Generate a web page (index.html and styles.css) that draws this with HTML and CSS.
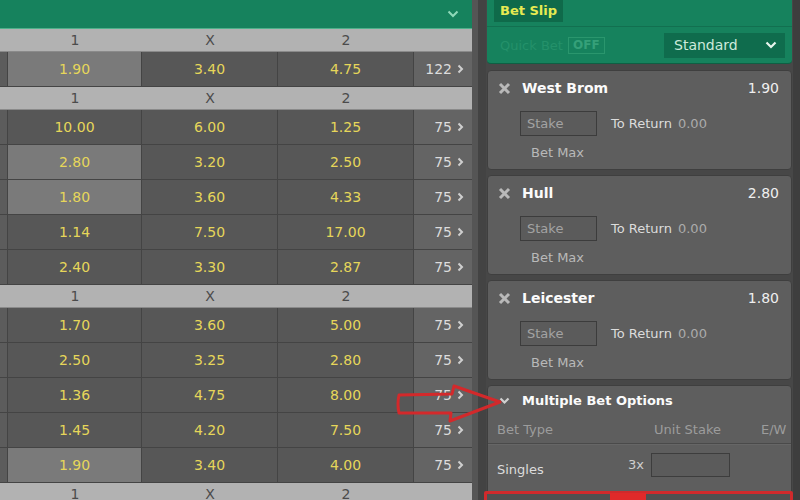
FILE: index.html
```html
<!DOCTYPE html>
<html>
<head>
<meta charset="utf-8">
<link rel="stylesheet" href="styles.css">
</head>
<body>
<div class="page">
  <div class="markets">
    <div class="topbar">
      <svg class="topchev" width="12" height="8" viewBox="0 0 12 8"><path d="M1.5 1.5 L6 6 L10.5 1.5" fill="none" stroke="#8fd9b9" stroke-width="2"/></svg>
    </div>
    <div class="grid">
      <div class="hdr"><span></span><span>1</span><span>X</span><span>2</span><span></span></div>
      <div class="row"><span class="edge"></span><span class="odd sel">1.90</span><span class="odd">3.40</span><span class="odd">4.75</span><span class="more">122<svg class="mchev" width="7" height="10" viewBox="0 0 7 10"><path d="M1.5 1.5 L5 5 L1.5 8.5" fill="none" stroke="#cfcfcf" stroke-width="2"/></svg></span></div>
      <div class="hdr"><span></span><span>1</span><span>X</span><span>2</span><span></span></div>
      <div class="row"><span class="edge"></span><span class="odd">10.00</span><span class="odd">6.00</span><span class="odd">1.25</span><span class="more">75<svg class="mchev" width="7" height="10" viewBox="0 0 7 10"><path d="M1.5 1.5 L5 5 L1.5 8.5" fill="none" stroke="#cfcfcf" stroke-width="2"/></svg></span></div>
      <div class="row"><span class="edge"></span><span class="odd sel">2.80</span><span class="odd">3.20</span><span class="odd">2.50</span><span class="more">75<svg class="mchev" width="7" height="10" viewBox="0 0 7 10"><path d="M1.5 1.5 L5 5 L1.5 8.5" fill="none" stroke="#cfcfcf" stroke-width="2"/></svg></span></div>
      <div class="row"><span class="edge"></span><span class="odd sel">1.80</span><span class="odd">3.60</span><span class="odd">4.33</span><span class="more">75<svg class="mchev" width="7" height="10" viewBox="0 0 7 10"><path d="M1.5 1.5 L5 5 L1.5 8.5" fill="none" stroke="#cfcfcf" stroke-width="2"/></svg></span></div>
      <div class="row"><span class="edge"></span><span class="odd">1.14</span><span class="odd">7.50</span><span class="odd">17.00</span><span class="more">75<svg class="mchev" width="7" height="10" viewBox="0 0 7 10"><path d="M1.5 1.5 L5 5 L1.5 8.5" fill="none" stroke="#cfcfcf" stroke-width="2"/></svg></span></div>
      <div class="row"><span class="edge"></span><span class="odd">2.40</span><span class="odd">3.30</span><span class="odd">2.87</span><span class="more">75<svg class="mchev" width="7" height="10" viewBox="0 0 7 10"><path d="M1.5 1.5 L5 5 L1.5 8.5" fill="none" stroke="#cfcfcf" stroke-width="2"/></svg></span></div>
      <div class="hdr"><span></span><span>1</span><span>X</span><span>2</span><span></span></div>
      <div class="row"><span class="edge"></span><span class="odd">1.70</span><span class="odd">3.60</span><span class="odd">5.00</span><span class="more">75<svg class="mchev" width="7" height="10" viewBox="0 0 7 10"><path d="M1.5 1.5 L5 5 L1.5 8.5" fill="none" stroke="#cfcfcf" stroke-width="2"/></svg></span></div>
      <div class="row"><span class="edge"></span><span class="odd">2.50</span><span class="odd">3.25</span><span class="odd">2.80</span><span class="more">75<svg class="mchev" width="7" height="10" viewBox="0 0 7 10"><path d="M1.5 1.5 L5 5 L1.5 8.5" fill="none" stroke="#cfcfcf" stroke-width="2"/></svg></span></div>
      <div class="row"><span class="edge"></span><span class="odd">1.36</span><span class="odd">4.75</span><span class="odd">8.00</span><span class="more">75<svg class="mchev" width="7" height="10" viewBox="0 0 7 10"><path d="M1.5 1.5 L5 5 L1.5 8.5" fill="none" stroke="#cfcfcf" stroke-width="2"/></svg></span></div>
      <div class="row"><span class="edge"></span><span class="odd">1.45</span><span class="odd">4.20</span><span class="odd">7.50</span><span class="more">75<svg class="mchev" width="7" height="10" viewBox="0 0 7 10"><path d="M1.5 1.5 L5 5 L1.5 8.5" fill="none" stroke="#cfcfcf" stroke-width="2"/></svg></span></div>
      <div class="row"><span class="edge"></span><span class="odd sel">1.90</span><span class="odd">3.40</span><span class="odd">4.00</span><span class="more">75<svg class="mchev" width="7" height="10" viewBox="0 0 7 10"><path d="M1.5 1.5 L5 5 L1.5 8.5" fill="none" stroke="#cfcfcf" stroke-width="2"/></svg></span></div>
      <div class="hdr"><span></span><span>1</span><span>X</span><span>2</span><span></span></div>
    </div>
  </div>
  <div class="divider"></div>
  <div class="slip">
    <div class="slip-head">
      <div class="tabrow"><span class="tab">Bet Slip</span></div>
      <div class="quickrow">
        <span class="quick">Quick Bet</span>
        <span class="off">OFF</span>
        <span class="select">Standard<svg width="12" height="8" viewBox="0 0 12 8"><path d="M1.5 1.5 L6 6 L10.5 1.5" fill="none" stroke="#e8f5ee" stroke-width="2.2"/></svg></span>
      </div>
    </div>

    <div class="card">
      <div class="title"><svg class="x" width="13" height="13" viewBox="0 0 13 13"><path d="M2 2 L11 11 M11 2 L2 11" stroke="#b9b9b9" stroke-width="3"/></svg><span class="name">West Brom</span><span class="price">1.90</span></div>
      <div class="stakerow"><span class="stake">Stake</span><span class="ret">To Return</span><span class="zero">0.00</span></div>
      <div class="betmax">Bet Max</div>
    </div>
    <div class="card">
      <div class="title"><svg class="x" width="13" height="13" viewBox="0 0 13 13"><path d="M2 2 L11 11 M11 2 L2 11" stroke="#b9b9b9" stroke-width="3"/></svg><span class="name">Hull</span><span class="price">2.80</span></div>
      <div class="stakerow"><span class="stake">Stake</span><span class="ret">To Return</span><span class="zero">0.00</span></div>
      <div class="betmax">Bet Max</div>
    </div>
    <div class="card">
      <div class="title"><svg class="x" width="13" height="13" viewBox="0 0 13 13"><path d="M2 2 L11 11 M11 2 L2 11" stroke="#b9b9b9" stroke-width="3"/></svg><span class="name">Leicester</span><span class="price">1.80</span></div>
      <div class="stakerow"><span class="stake">Stake</span><span class="ret">To Return</span><span class="zero">0.00</span></div>
      <div class="betmax">Bet Max</div>
    </div>
    <div class="card multi">
      <div class="title"><svg class="x" width="13" height="13" viewBox="0 0 13 13"><path d="M2.5 4.5 L6.5 8.5 L10.5 4.5" fill="none" stroke="#d0d0d0" stroke-width="2.2"/></svg><span class="name small">Multiple Bet Options</span></div>
      <div class="colhead"><span class="bt">Bet Type</span><span class="us">Unit Stake</span><span class="ew">E/W</span></div>
      <div class="singles"><span class="sg">Singles</span><span class="mult">3x</span><span class="unit"></span></div>
    </div>
  </div>
  <div class="rightedge"></div>

  <svg class="arrow" width="120" height="50" viewBox="0 0 120 50"><path d="M9 15 L62 14 L64 6 L110 22 L60 41 L61 33 L9 33 Q7 24 9 15 Z" fill="none" stroke="#d3292b" stroke-width="3" stroke-linejoin="round"/></svg>
  <div class="redbox"><span class="redblock"></span></div>
</div>
</body>
</html>
```

FILE: styles.css
```css
html, body {
  margin: 0;
  padding: 0;
}
body {
  background: #474747;
  font-family: "DejaVu Sans", Verdana, sans-serif;
  width: 800px;
  height: 500px;
  overflow: hidden;
}
.page {
  position: relative;
  display: flex;
  width: 800px;
  height: 500px;
  overflow: hidden;
}
.markets {
  width: 472px;
  flex: none;
  display: flex;
  flex-direction: column;
}
.markets > *, .grid > *, .slip > * {
  flex: none;
}
.topbar {
  height: 29px;
  box-sizing: border-box;
  background: #16825d;
  border-bottom: 1px solid #4fb08b;
  display: flex;
  align-items: center;
  justify-content: flex-end;
  padding-right: 13px;
}
.grid {
  display: flex;
  flex-direction: column;
}
.hdr, .row {
  display: grid;
  grid-template-columns: 8px 134px 136px 136px 58px;
}
.hdr {
  height: 23px;
  background: #b2b2b2;
  color: #4b4b4b;
  font-size: 14px;
  line-height: 23px;
  text-align: center;
  border-bottom: 1px solid #8a8a8a;
  box-sizing: border-box;
}
.row {
  height: 35px;
  box-sizing: border-box;
}
.row > span {
  box-sizing: border-box;
  border-right: 1px solid #444;
  border-bottom: 1px solid #444;
  display: flex;
  align-items: center;
  justify-content: center;
}
.edge {
  background: #5c5c5c;
}
.odd {
  background: #575757;
  color: #e6d65a;
  font-size: 14px;
}
.odd.sel {
  background: #7a7a7a;
}
.more {
  background: #646464;
  color: #dcdcdc;
  font-size: 14px;
  justify-content: flex-end !important;
  padding-right: 8px;
  gap: 5px;
  border-right: none !important;
}
.divider {
  width: 14px;
  flex: none;
  background: linear-gradient(to right, #555 0, #555 6px, #434343 6px);
}
.slip {
  flex: none;
  display: flex;
  flex-direction: column;
  gap: 5px;
  padding-left: 1px;
  box-sizing: border-box;
  width: 307px;
}
.slip-head {
  height: 64px;
  background: #16825d;
  border-radius: 0 0 4px 4px;
  border-bottom: 1px solid #0e5f43;
  box-sizing: border-box;
  display: flex;
  flex-direction: column;
  margin-bottom: 1px;
  margin-right: 1px;
}
.tabrow {
  height: 27px;
  border-bottom: 1px solid #127050;
  padding-left: 7px;
  box-sizing: border-box;
}
.tab {
  display: inline-block;
  background: #0f6a4a;
  color: #e7ea52;
  font-weight: bold;
  font-size: 13px;
  line-height: 22px;
  padding: 0 6px;
}
.quickrow {
  flex: 1;
  display: flex;
  align-items: center;
  padding-left: 13px;
}
.quick {
  color: #24916a;
  font-size: 13px;
  width: 68px;
}
.off {
  color: #35a079;
  border: 1px solid #2a966d;
  font-size: 12px;
  font-weight: bold;
  padding: 0 4px;
  line-height: 15px;
}
.select {
  margin-left: auto;
  margin-right: 7px;
  width: 121px;
  height: 25px;
  box-sizing: border-box;
  background: #0f6c4d;
  color: #cdeadc;
  font-size: 14px;
  display: flex;
  align-items: center;
  justify-content: space-between;
  padding: 0 8px 0 10px;
}
.card {
  height: 100px;
  box-sizing: border-box;
  background: #5e5e5e;
  border: 1px solid #3f3f3f;
  border-radius: 4px;
  padding: 8px 12px 0 10px;
  margin-right: 1px;
}
.title {
  display: flex;
  align-items: center;
  height: 18px;
}
.x {
  flex: none;
  margin-right: 11px;
}
.name {
  color: #fbfbfb;
  font-weight: bold;
  font-size: 14px;
}
.name.small {
  font-size: 13px;
}
.price {
  margin-left: auto;
  color: #efefef;
  font-size: 14px;
}
.stakerow {
  display: flex;
  align-items: center;
  margin-top: 14px;
  padding-left: 22px;
}
.stake {
  width: 77px;
  height: 25px;
  box-sizing: border-box;
  border: 1px solid #3c3c3c;
  background: #5b5b5b;
  color: #a3a3a3;
  font-size: 13px;
  line-height: 23px;
  padding-left: 6px;
}
.ret {
  color: #dcdcdc;
  font-size: 13px;
  margin-left: 14px;
}
.zero {
  color: #ababab;
  font-size: 13px;
  margin-left: 6px;
}
.betmax {
  color: #b9b9b9;
  font-size: 13px;
  line-height: 18px;
  margin-top: 8px;
  padding-left: 33px;
}
.multi {
  height: 140px;
  padding: 5px 0 0 0;
}
.multi .title {
  padding-left: 10px;
}
.colhead {
  display: flex;
  align-items: center;
  height: 35px;
  padding-top: 7px;
  box-sizing: border-box;
  border-bottom: 1px solid #4a4a4a;
  box-shadow: 0 1px 0 #666;
  color: #9c9c9c;
  font-size: 13px;
  padding-left: 9px;
}
.us {
  margin-left: 101px;
}
.ew {
  margin-left: 40px;
}
.singles {
  display: flex;
  align-items: center;
  height: 44px;
  padding-left: 9px;
  color: #dcdcdc;
  font-size: 13px;
}
.sg {
  padding-top: 6px;
  width: 131px;
}
.mult {
  color: #cfcfcf;
  padding-bottom: 3px;
}
.unit {
  width: 79px;
  height: 24px;
  box-sizing: border-box;
  border: 1px solid #3d3d3d;
  background: #5b5b5b;
  margin-left: 7px;
  margin-bottom: 3px;
}
.rightedge {
  flex: 1;
  background: #3e3e3e;
}
.arrow {
  position: absolute;
  left: 390px;
  top: 380px;
}
.redbox {
  position: absolute;
  left: 484px;
  top: 491px;
  width: 309px;
  height: 20px;
  box-sizing: border-box;
  border: 3px solid #d02a2c;
  border-radius: 2px;
  background: #505050;
}
.redblock {
  position: absolute;
  left: 123px;
  top: -1px;
  width: 36px;
  height: 10px;
  background: #e02a2a;
}
```
